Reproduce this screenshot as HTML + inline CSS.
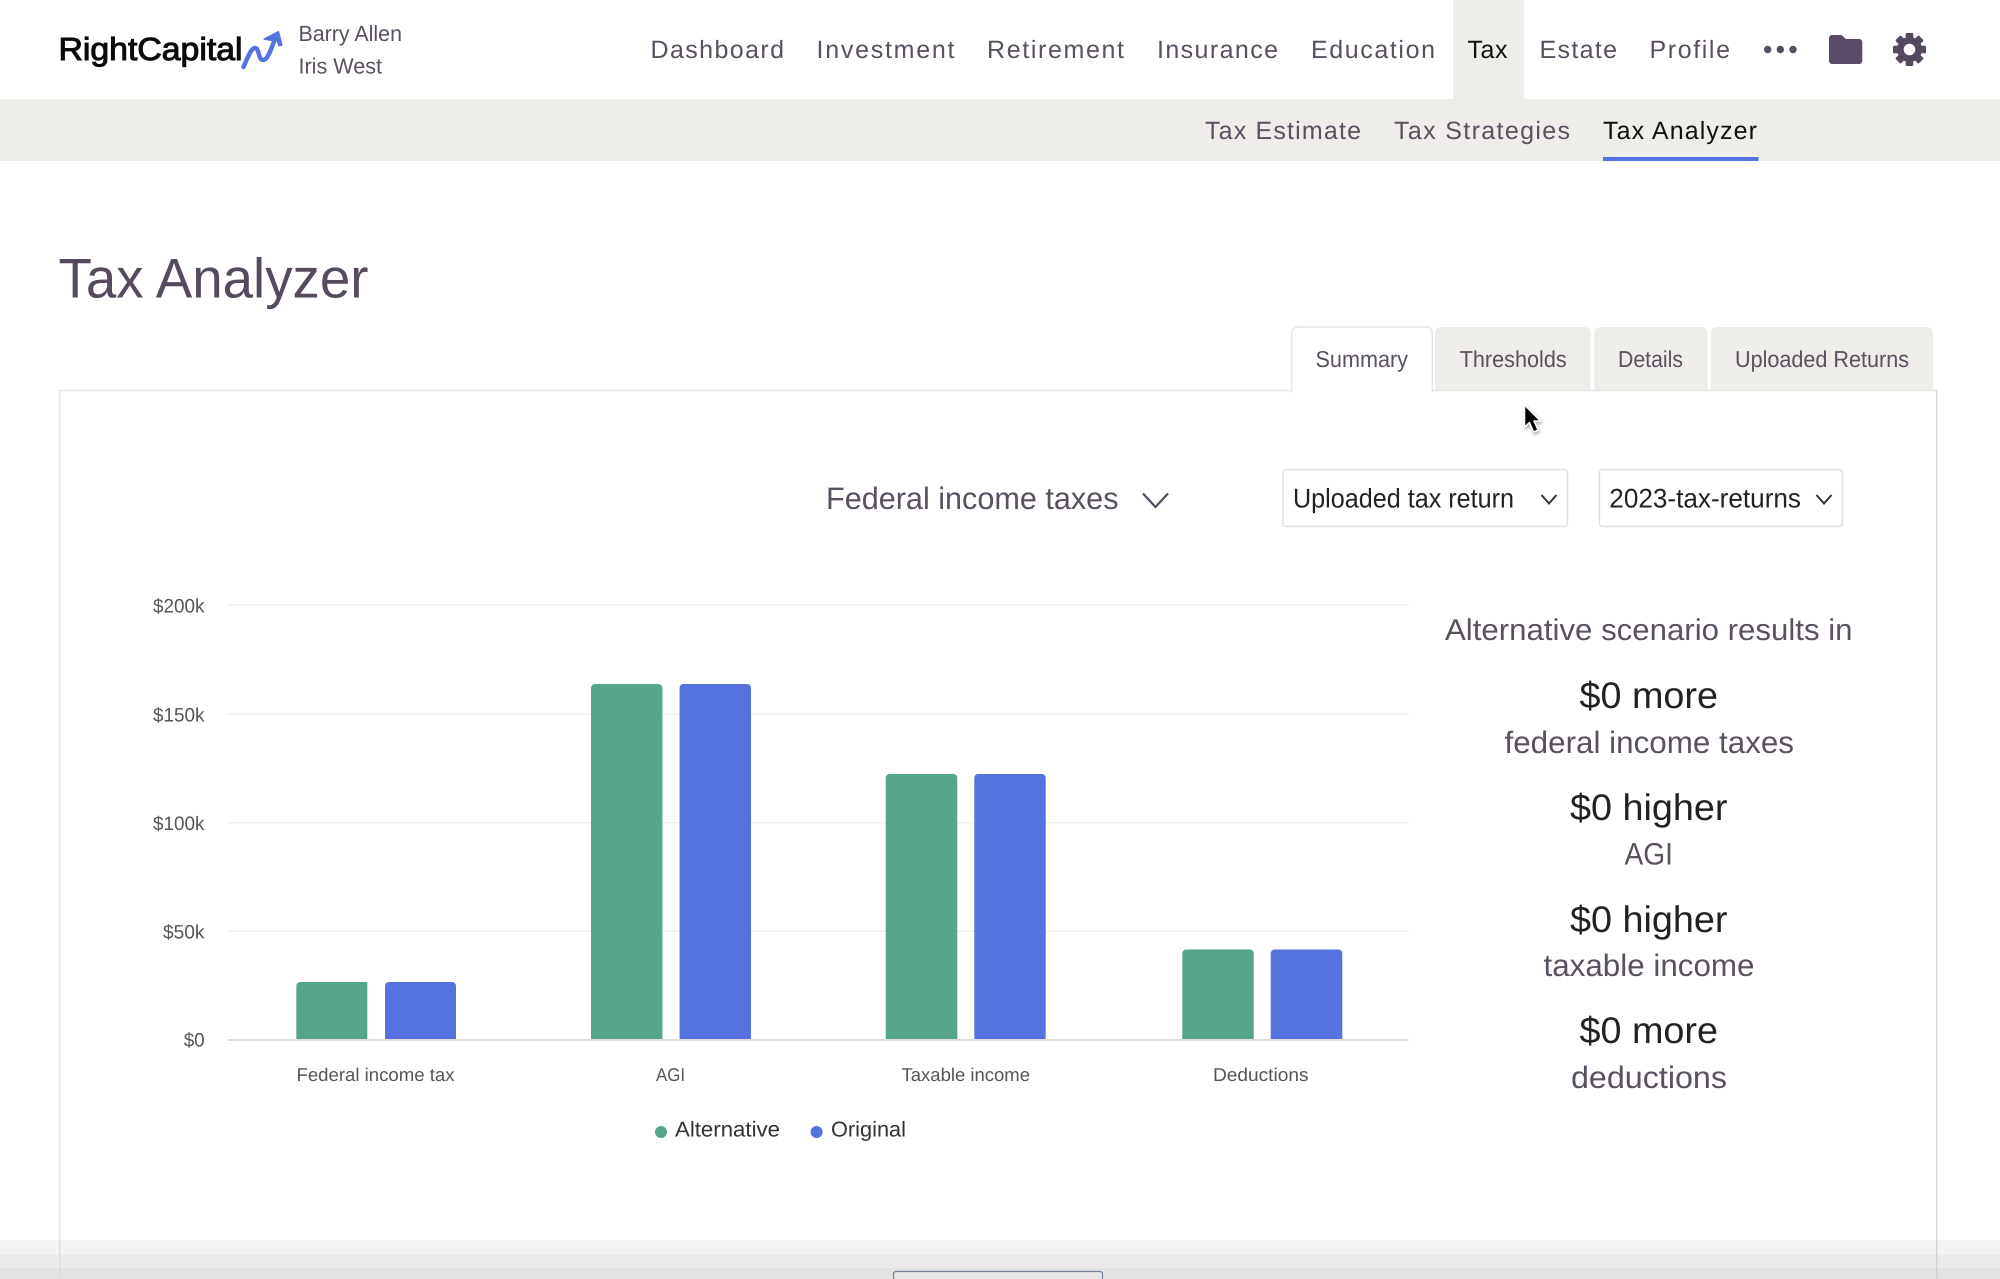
<!DOCTYPE html>
<html lang="en">
<head>
<meta charset="utf-8">
<title>Tax Analyzer</title>
<style>
html,body{margin:0;padding:0;background:#fff;width:2000px;height:1279px;overflow:hidden}
svg{display:block}
text{font-family:"Liberation Sans",Arial,sans-serif;text-rendering:geometricPrecision}
.nav{font-size:25px;fill:#5a5060}
.tab{font-size:23px;fill:#5a5060}
.sel{font-size:27px;fill:#222}
.yl{font-size:19.5px;fill:#555}
.xl{font-size:18.5px;fill:#555}
.lg{font-size:21.5px;fill:#333}
.big{font-size:37px;fill:#222}
.sub{font-size:31px;fill:#5a5060}
</style>
</head>
<body>
<svg xmlns="http://www.w3.org/2000/svg" width="2000" height="1279" viewBox="0 0 2000 1279">
<defs><filter id="cs" x="-50%" y="-50%" width="200%" height="200%"><feDropShadow dx="1" dy="2" stdDeviation="1.5" flood-color="#000" flood-opacity=".35"/></filter></defs>
<rect width="2000" height="1279" fill="#fff"/>

<!-- header -->
<rect x="0" y="99" width="2000" height="62" fill="#eeede9"/>
<rect x="1453" y="0" width="71" height="99" fill="#eeede9"/>

<text x="58.500" y="60" font-size="32" fill="#0a0a0a" stroke="#0a0a0a" stroke-width="1" textLength="184" lengthAdjust="spacingAndGlyphs">RightCapital</text>
<path d="M243.500 67C248 57 251 48 255 48C259.500 48 258 60 263 60C268.500 60 272 46 276 36" fill="none" stroke="#5472e0" stroke-width="4.400" stroke-linecap="round"/>
<path d="M278.500 31.500L264 39L271.500 40.500L276.500 39L279 46L282 45Z" fill="#5472e0" stroke="#5472e0" stroke-width="1.200" stroke-linejoin="round"/>
<text x="298.500" y="41" font-size="22" fill="#5a5060" textLength="103.500" lengthAdjust="spacingAndGlyphs">Barry Allen</text>
<text x="298.500" y="73.500" font-size="22" fill="#5a5060" textLength="83.500" lengthAdjust="spacingAndGlyphs">Iris West</text>

<text class="nav" x="650.500" y="58" textLength="133.500" lengthAdjust="spacing">Dashboard</text>
<text class="nav" x="816.500" y="58" textLength="138" lengthAdjust="spacing">Investment</text>
<text class="nav" x="987" y="58" textLength="137" lengthAdjust="spacing">Retirement</text>
<text class="nav" x="1157" y="58" textLength="121" lengthAdjust="spacing">Insurance</text>
<text class="nav" x="1311" y="58" textLength="124" lengthAdjust="spacing">Education</text>
<text class="nav" x="1467.500" y="58" textLength="40" lengthAdjust="spacing" style="fill:#111">Tax</text>
<text class="nav" x="1539.500" y="58" textLength="77.500" lengthAdjust="spacing">Estate</text>
<text class="nav" x="1649.500" y="58" textLength="80.500" lengthAdjust="spacing">Profile</text>

<circle cx="1767.700" cy="49.500" r="3.700" fill="#55505f"/>
<circle cx="1780.300" cy="49.500" r="3.700" fill="#55505f"/>
<circle cx="1793" cy="49.500" r="3.700" fill="#55505f"/>

<path d="M1832 35H1841.500L1846 39H1859.300A3 3 0 0 1 1862.300 42V61A3 3 0 0 1 1859.300 64H1832A3 3 0 0 1 1829 61V38A3 3 0 0 1 1832 35Z" fill="#5a4c66"/>

<g transform="translate(1909.500 49.500)" fill="#55495f">
<circle r="12.500"/>
<rect x="-3.800" y="-16.500" width="7.600" height="33" rx="1.200"/>
<rect x="-3.800" y="-16.500" width="7.600" height="33" rx="1.200" transform="rotate(45)"/>
<rect x="-3.800" y="-16.500" width="7.600" height="33" rx="1.200" transform="rotate(90)"/>
<rect x="-3.800" y="-16.500" width="7.600" height="33" rx="1.200" transform="rotate(135)"/>
<circle r="5.800" fill="#fff"/>
</g>

<text class="nav" x="1205" y="139" textLength="156" lengthAdjust="spacing">Tax Estimate</text>
<text class="nav" x="1394" y="139" textLength="176" lengthAdjust="spacing">Tax Strategies</text>
<text class="nav" x="1603" y="139" textLength="154" lengthAdjust="spacing" style="fill:#111">Tax Analyzer</text>
<rect x="1603" y="157" width="155.500" height="4" fill="#5472e0"/>

<!-- title -->
<text x="58.500" y="297.500" font-size="56" fill="#564b5e" textLength="310" lengthAdjust="spacingAndGlyphs">Tax Analyzer</text>

<!-- panel -->
<path d="M59.700 1279V390.500H1936.700V1279" fill="#fff" stroke="#e4e4e4" stroke-width="1.500"/>
<line x1="1936.700" y1="390.500" x2="1936.700" y2="1240" stroke="#d8d8d8" stroke-width="1.200"/>

<!-- tabs -->
<path d="M1435 390V333A6 6 0 0 1 1441 327H1584.600A6 6 0 0 1 1590.600 333V390Z" fill="#eeede9"/>
<path d="M1594.400 390V333A6 6 0 0 1 1600.400 327H1701.700A6 6 0 0 1 1707.700 333V390Z" fill="#eeede9"/>
<path d="M1710.800 390V333A6 6 0 0 1 1716.800 327H1927A6 6 0 0 1 1933 333V390Z" fill="#eeede9"/>
<path d="M1291.700 391.500V333A6 6 0 0 1 1297.700 327H1426.300A6 6 0 0 1 1432.300 333V391.500Z" fill="#fff" stroke="#e6e6e6" stroke-width="1.500"/>
<rect x="1292.500" y="388.500" width="139" height="4" fill="#fff"/>
<text class="tab" x="1315.500" y="367" textLength="92.500" lengthAdjust="spacingAndGlyphs">Summary</text>
<text class="tab" x="1459.700" y="367" textLength="107" lengthAdjust="spacingAndGlyphs">Thresholds</text>
<text class="tab" x="1618" y="367" textLength="65" lengthAdjust="spacingAndGlyphs">Details</text>
<text class="tab" x="1735" y="367" textLength="174" lengthAdjust="spacingAndGlyphs">Uploaded Returns</text>

<!-- cursor -->
<path d="M1524.500 405V427L1529.500 422.500L1533.500 432L1538 430L1534 421H1540.500Z" fill="#000" stroke="#fff" stroke-width="1.500" stroke-linejoin="round" filter="url(#cs)"/>

<!-- controls -->
<text x="826" y="509" font-size="31" fill="#5a5060" textLength="292.500" lengthAdjust="spacingAndGlyphs">Federal income taxes</text>
<path d="M1143 493.500L1155.500 507L1168 493.500" fill="none" stroke="#55495f" stroke-width="2.200"/>

<rect x="1283" y="469.500" width="284.500" height="57" rx="3" fill="#fff" stroke="#e3e0d9" stroke-width="1.500"/>
<text class="sel" x="1293" y="507.500" textLength="221" lengthAdjust="spacingAndGlyphs">Uploaded tax return</text>
<path d="M1541.500 495L1549 503.500L1556.500 495" fill="none" stroke="#333" stroke-width="2"/>

<rect x="1599.400" y="469.500" width="243" height="57" rx="3" fill="#fff" stroke="#e3e0d9" stroke-width="1.500"/>
<text class="sel" x="1609.300" y="507.500" textLength="191.700" lengthAdjust="spacingAndGlyphs">2023-tax-returns</text>
<path d="M1816.500 495L1824 503.500L1831.500 495" fill="none" stroke="#333" stroke-width="2"/>

<!-- chart grid -->
<g stroke="#efefec" stroke-width="1.500">
<line x1="228" y1="605.300" x2="1408.700" y2="605.300"/>
<line x1="228" y1="714" x2="1408.700" y2="714"/>
<line x1="228" y1="822.700" x2="1408.700" y2="822.700"/>
<line x1="228" y1="931.300" x2="1408.700" y2="931.300"/>
</g>

<text class="yl" x="153" y="612.700" textLength="51.500" lengthAdjust="spacingAndGlyphs">$200k</text>
<text class="yl" x="153" y="721.300" textLength="51.500" lengthAdjust="spacingAndGlyphs">$150k</text>
<text class="yl" x="153" y="829.800" textLength="51.500" lengthAdjust="spacingAndGlyphs">$100k</text>
<text class="yl" x="163" y="938.300" textLength="41.500" lengthAdjust="spacingAndGlyphs">$50k</text>
<text class="yl" x="183.700" y="1046.700" textLength="21" lengthAdjust="spacingAndGlyphs">$0</text>

<!-- bars -->
<g fill="#55a58a">
<path d="M296.300 1040V986A4 4 0 0 1 300.300 982H367.300V1040Z M363.300 982A4 4 0 0 1 367.300 986H363.300Z" fill-rule="nonzero"/>
<path d="M591 1040V688A4 4 0 0 1 595 684H658.400A4 4 0 0 1 662.400 688V1040Z"/>
<path d="M885.700 1040V778A4 4 0 0 1 889.700 774H953.300A4 4 0 0 1 957.300 778V1040Z"/>
<path d="M1182.300 1040V953.500A4 4 0 0 1 1186.300 949.500H1249.700A4 4 0 0 1 1253.700 953.500V1040Z"/>
</g>
<g fill="#5672de">
<path d="M385 1040V986A4 4 0 0 1 389 982H452A4 4 0 0 1 456 986V1040Z"/>
<path d="M679.600 1040V688A4 4 0 0 1 683.600 684H747A4 4 0 0 1 751 688V1040Z"/>
<path d="M974.300 1040V778A4 4 0 0 1 978.300 774H1041.700A4 4 0 0 1 1045.700 778V1040Z"/>
<path d="M1270.700 1040V953.500A4 4 0 0 1 1274.700 949.500H1338.300A4 4 0 0 1 1342.300 953.500V1040Z"/>
</g>
<line x1="228" y1="1040" x2="1408.700" y2="1040" stroke="#dfdbd5" stroke-width="2"/>

<text class="xl" x="296.500" y="1081" textLength="158" lengthAdjust="spacingAndGlyphs">Federal income tax</text>
<text class="xl" x="656" y="1081" textLength="29" lengthAdjust="spacingAndGlyphs">AGI</text>
<text class="xl" x="901.500" y="1081" textLength="128.500" lengthAdjust="spacingAndGlyphs">Taxable income</text>
<text class="xl" x="1213" y="1081" textLength="95.500" lengthAdjust="spacingAndGlyphs">Deductions</text>

<circle cx="661" cy="1132" r="6" fill="#55a58a"/>
<text class="lg" x="675" y="1136.700" textLength="105" lengthAdjust="spacingAndGlyphs">Alternative</text>
<circle cx="816.600" cy="1132" r="6" fill="#5672de"/>
<text class="lg" x="831" y="1136.700" textLength="75" lengthAdjust="spacingAndGlyphs">Original</text>

<!-- summary -->
<text x="1445" y="640" font-size="30" fill="#5a5060" textLength="407.500" lengthAdjust="spacingAndGlyphs">Alternative scenario results in</text>
<text class="big" x="1579.500" y="708" textLength="138.500" lengthAdjust="spacingAndGlyphs">$0 more</text>
<text class="sub" x="1504.500" y="753" textLength="289.500" lengthAdjust="spacingAndGlyphs">federal income taxes</text>
<text class="big" x="1570" y="820" textLength="157.500" lengthAdjust="spacingAndGlyphs">$0 higher</text>
<text class="sub" x="1624.500" y="864.500" textLength="48.500" lengthAdjust="spacingAndGlyphs">AGI</text>
<text class="big" x="1570" y="932" textLength="157.500" lengthAdjust="spacingAndGlyphs">$0 higher</text>
<text class="sub" x="1543.500" y="976" textLength="211" lengthAdjust="spacingAndGlyphs">taxable income</text>
<text class="big" x="1579.500" y="1043" textLength="138.500" lengthAdjust="spacingAndGlyphs">$0 more</text>
<text class="sub" x="1571" y="1088" textLength="156" lengthAdjust="spacingAndGlyphs">deductions</text>

<!-- bottom fade -->
<rect x="0" y="1240" width="2000" height="15" fill="#f2f2f2"/>
<rect x="0" y="1255" width="2000" height="13" fill="#eaeae9"/>
<rect x="0" y="1268" width="2000" height="11" fill="#e2e2e2"/>
<line x1="59.700" y1="1240" x2="59.700" y2="1279" stroke="#dcdcdc" stroke-width="1.500"/>
<line x1="1936.700" y1="1240" x2="1936.700" y2="1279" stroke="#cfcfcf" stroke-width="1.200"/>
<path d="M893.500 1279V1274A2.500 2.500 0 0 1 896 1271.500H1100A2.500 2.500 0 0 1 1102.500 1274V1279" fill="#e6e6e6" stroke="#77849c" stroke-width="1.200"/>
</svg>
</body>
</html>
